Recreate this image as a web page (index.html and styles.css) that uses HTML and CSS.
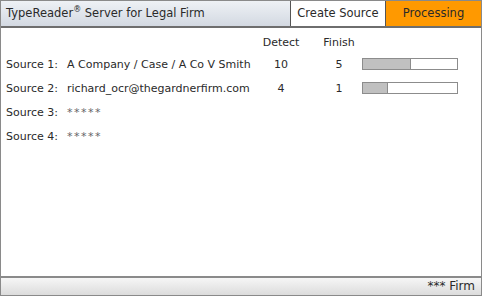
FILE: index.html
```html
<!DOCTYPE html>
<html lang="en">
<head>
    <meta charset="UTF-8">
    <title>TypeReader Server</title>
    <link rel="stylesheet" href="styles.css">
</head>
<body>
    <div class="window">
        <div class="header">
            <div class="title">TypeReader<sup>&reg;</sup> Server for Legal Firm</div>
            <div class="tab">Create Source</div>
            <div class="tab active">Processing</div>
        </div>
        <div class="content">
            <div class="row head">
                <span class="label"></span>
                <span class="name"></span>
                <span class="num">Detect</span>
                <span class="num">Finish</span>
            </div>
            <div class="row">
                <span class="label">Source 1:</span>
                <span class="name">A Company / Case / A Co V Smith</span>
                <span class="num">10</span>
                <span class="num">5</span>
                <span class="bar"><span class="fill" style="width: 50%"></span></span>
            </div>
            <div class="row">
                <span class="label">Source 2:</span>
                <span class="name">richard_ocr@thegardnerfirm.com</span>
                <span class="num">4</span>
                <span class="num">1</span>
                <span class="bar"><span class="fill" style="width: 25%"></span></span>
            </div>
            <div class="row">
                <span class="label">Source 3:</span>
                <span class="name stars">*****</span>
            </div>
            <div class="row">
                <span class="label">Source 4:</span>
                <span class="name stars">*****</span>
            </div>
        </div>
        <div class="footer">*** Firm</div>
    </div>
</body>
</html>
```
FILE: styles.css
```css
html, body {
    margin: 0;
    padding: 0;
}
body {
    font-family: "DejaVu Sans", Verdana, sans-serif;
    font-size: 11px;
    color: #2a2a2a;
    background: #fff;
}
.window {
    width: 480px;
    height: 294px;
    border: 1px solid #8a8a8a;
    display: flex;
    flex-direction: column;
}
.header {
    height: 25px;
    display: flex;
    background: linear-gradient(#eef1f5, #d3d9e2);
    border-bottom: 2px solid #6e6e6e;
}
.title {
    flex: 1;
    padding-left: 5px;
    line-height: 25px;
    font-size: 11.5px;
}
.title sup {
    font-size: 8px;
    vertical-align: 5px;
    line-height: 0;
}
.tab {
    width: 94px;
    text-align: center;
    line-height: 24px;
    background: #fff;
    border-left: 1px solid #555;
    font-size: 11.5px;
}
.tab.active {
    background: #ff9900;
    width: 95px;
}
.content {
    flex: 1;
    padding: 4px 0 0 5px;
}
.row {
    display: flex;
    align-items: center;
    height: 24px;
    white-space: nowrap;
}
.row.head {
    height: 20px;
}
.label {
    width: 61px;
}
.name {
    width: 185px;
}
.stars {
    color: #666;
    letter-spacing: 1.5px;
}
.num {
    width: 58px;
    text-align: center;
}
.bar {
    margin-left: -6px;
    width: 94px;
    height: 10px;
    border: 1px solid #8c8c8c;
    background: #fff;
    display: flex;
}
.fill {
    background: #c0c0c0;
    border-right: 1px solid #8c8c8c;
}
.footer {
    height: 17px;
    border-top: 2px solid #8a8a8a;
    background: linear-gradient(#f6f6f6, #dcdcdc);
    text-align: right;
    padding-right: 6px;
    line-height: 17px;
    font-size: 12px;
}
```
